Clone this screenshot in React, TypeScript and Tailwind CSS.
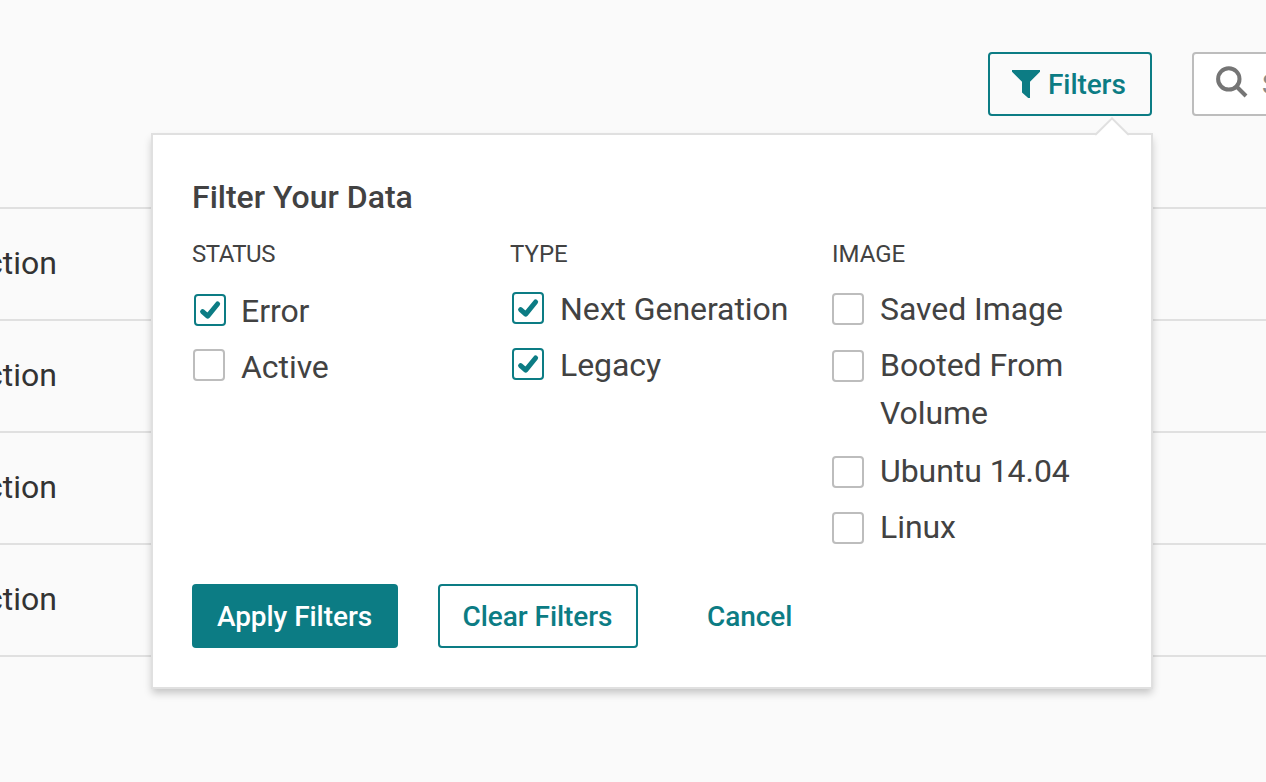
import React from "react";

type Option = { label: string; checked?: boolean; row: string; box: string };

const rows = ["server-1", "server-2", "server-3", "server-4"];

const statusOptions: Option[] = [
  { label: "Error", checked: true, row: "mt-0.5", box: "mt-[7px] ml-0.5 mr-[15px]" },
  { label: "Active", row: "mt-2", box: "mt-1.5 ml-px mr-4" },
];

const typeOptions: Option[] = [
  { label: "Next Generation", checked: true, row: "mt-0", box: "mt-[7px] ml-0.5 mr-4" },
  { label: "Legacy", checked: true, row: "mt-2", box: "mt-[7px] ml-0.5 mr-4" },
];

const imageOptions: Option[] = [
  { label: "Saved Image", row: "mt-0", box: "mt-2 mr-4" },
  { label: "Booted From Volume", row: "mt-2", box: "mt-[9px] mr-4" },
  { label: "Ubuntu 14.04", row: "mt-2.5", box: "mt-[9px] mr-4" },
  { label: "Linux", row: "mt-2", box: "mt-[8.5px] mr-4" },
];

function Checkbox({ checked, className }: { checked?: boolean; className: string }) {
  return (
    <span
      role="checkbox"
      aria-checked={!!checked}
      className={`flex size-8 shrink-0 rounded-[4px] border-2 bg-white ${
        checked ? "border-[#0c7c84]" : "border-[#bdbdbd]"
      } ${className}`}
    >
      {checked && (
        <svg viewBox="0 0 28 28" className="size-7" fill="none" stroke="#0c7c84" strokeWidth="5" strokeLinecap="round" strokeLinejoin="round">
          <path d="M6.6 15.6 L11.7 20.2 L21.6 8" />
        </svg>
      )}
    </span>
  );
}

function Group({
  title,
  options,
  className,
  titleClass = "",
}: {
  title: string;
  options: Option[];
  className: string;
  titleClass?: string;
}) {
  return (
    <section className={className}>
      <h3 className={`h-8 text-[24px] leading-8 ${titleClass}`}>{title}</h3>
      <div className="flex flex-col pt-[15px] text-[32px] leading-[48px] tracking-[-0.06px]">
        {options.map((o) => (
          <label key={o.label} className={`flex items-start ${o.row}`}>
            <Checkbox checked={o.checked} className={o.box} />
            <span>{o.label}</span>
          </label>
        ))}
      </div>
    </section>
  );
}

export default function App() {
  return (
    <div className="relative h-[782px] w-[1266px] overflow-hidden bg-[#fafafa] font-['Roboto',sans-serif] text-[#424242]">
      <header className="flex h-[116px] items-end pl-[988px]">
        <button className="flex h-16 w-[164px] shrink-0 items-center rounded-[4px] border-2 border-[#0c7c84] pl-[22px] text-[28px] font-medium tracking-[-0.08px] text-[#0c7c84]">
          <svg viewBox="0 0 28 28" className="mr-2 h-7 w-7 shrink-0" fill="#0c7c84">
            <path d="M0 0H28V1.8L18 11.8V28H16.2L10 22.4V11.8L0 1.8Z" />
          </svg>
          <span className="pt-0.5">Filters</span>
        </button>
        <div className="ml-10 flex h-16 w-[400px] shrink-0 items-center rounded-[4px] border-2 border-[#bdbdbd] bg-white pl-[22px] text-[28px] text-[#8a8a8a]">
          <svg viewBox="0 0 32 32" className="-mt-1 mr-3.5 size-8 shrink-0" fill="none" stroke="#757575" strokeWidth="4">
            <circle cx="12.8" cy="12.9" r="10.7" />
            <path d="M20.5 20.5L30 30" />
          </svg>
          <span className="pt-0.5">Search</span>
        </div>
      </header>

      <main className="mt-[91px] border-t-2 border-[#e0e0e0]">
        {rows.map((r) => (
          <div key={r} className="flex h-28 items-center border-b-2 border-[#e0e0e0] pb-0.5 text-[32px] text-[#333333]">
            <div className="flex w-[57px] justify-end">Action</div>
          </div>
        ))}
      </main>

      <div className="absolute top-[133px] left-[151px] h-[556px] w-[1002px] border-2 border-[#e0e0e0] bg-white pt-10 pl-[39px] shadow-[0_5px_8px_-1px_rgba(0,0,0,0.22)]">
        <svg viewBox="0 0 36 20" className="absolute -top-[18px] left-[941px] h-5 w-9">
          <path d="M2 18L18 2L34 18V20H2Z" fill="white" />
          <path d="M1 17.2H2L18 1.4L34 17.2H35" fill="none" stroke="#e0e0e0" strokeWidth="2" />
        </svg>
        <h2 className="h-11 text-[32px] leading-11 font-medium">Filter Your Data</h2>
        <div className="mt-[19px] flex h-[346px]">
          <Group title="STATUS" options={statusOptions} className="w-[318px]" titleClass="tracking-[-0.5px]" />
          <Group title="TYPE" options={typeOptions} className="w-[322px]" />
          <Group title="IMAGE" options={imageOptions} className="w-[280px]" />
        </div>
        <footer className="flex text-[28px] font-medium tracking-[-0.06px] text-[#0c7c84]">
          <button className="h-16 w-[206px] rounded-[4px] bg-[#0c7c84] pt-0.5 pr-px text-white">Apply Filters</button>
          <button className="ml-10 h-16 w-[200px] rounded-[4px] border-2 border-[#0c7c84] pt-0.5 pr-px">Clear Filters</button>
          <button className="ml-[69px] h-16 pt-0.5">Cancel</button>
        </footer>
      </div>
    </div>
  );
}
